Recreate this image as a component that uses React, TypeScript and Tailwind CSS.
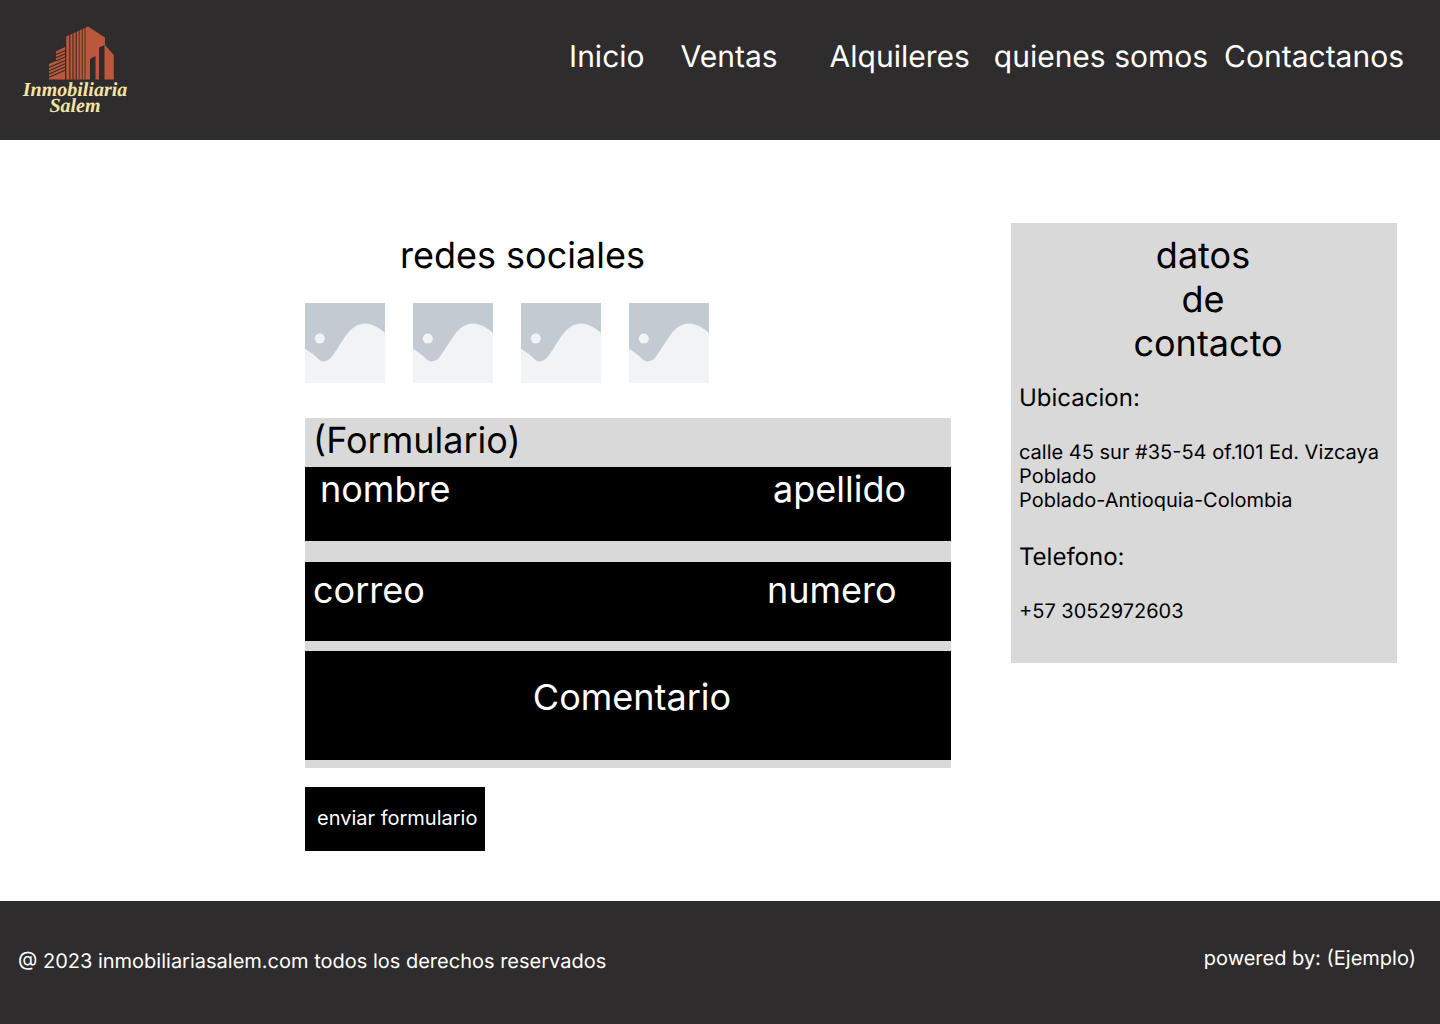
function Logo() {
  return (
    <svg
      viewBox="0 0 120 110"
      className="h-[110px] w-[120px]"
      role="img"
      aria-label="Inmobiliaria Salem"
    >
      <g fill="#bd573c">
        <path d="M34 49 L41 46 V36.500 L50 32 V64.500 H34 Z" />
        <path d="M51.300 21.500 L73 11.500 L90 22.500 V30 L84 32.500 V64.500 H80.500 V41 L75 44 V64.500 H51.300 Z" />
        <path d="M89.500 29.500 L98.800 40 V64.500 H89.500 Z" />
      </g>
      <g stroke="#2e2c2d" strokeWidth="1.100">
        <path d="M41 39.500 L50 35.500 M41 42.800 L50 38.800 M41 46 L50 42" />
        <path d="M34 52.500 L50 45.500 M34 55.800 L50 48.800 M34 59 L50 52 M34 62.300 L50 55.300" />
        <path d="M54.800 17 V64.500 M58 16 V64.500 M61.200 15 V64.500" />
        <path d="M64.200 14 V64.500 M67.200 13 V64.500 M70 11 V64.500" strokeWidth="0.800" />
      </g>
      <g
        fill="#f8e3a4"
        fontFamily="'Liberation Serif', serif"
        fontStyle="italic"
        fontWeight="700"
        textAnchor="middle"
      >
        <text x="60" y="81" fontSize="20">Inmobiliaria</text>
        <text x="60" y="97" fontSize="20">Salem</text>
      </g>
    </svg>
  );
}

function Placeholder({ label }: { label: string }) {
  return (
    <a href="#" aria-label={label}>
      <svg viewBox="0 0 80 80" className="block size-20" aria-hidden="true">
        <path d="M0 0H80V80H0Z" fill="#c2cad2" />
        <path
          d="M0 46 C6 49 10 53 14 56.500 C18 60 23 59 28 52 C36 42 44 20.500 60 20.500 C67 20.500 73 24 80 30 V80 H0 Z"
          fill="#f1f3f5"
        />
        <circle cx="14.800" cy="35.600" r="5" fill="#f1f3f5" />
      </svg>
    </a>
  );
}

const links = [
  { text: "Inicio", gap: "mr-9" },
  { text: "Ventas", gap: "mr-[52px]" },
  { text: "Alquileres", gap: "mr-6" },
  { text: "quienes somos", gap: "mr-4" },
  { text: "Contactanos", gap: "" },
];

const networks = ["Red social 1", "Red social 2", "Red social 3", "Red social 4"];

const field =
  "block h-11 min-w-0 bg-transparent text-4xl leading-[44px] text-white outline-none placeholder:text-white placeholder:opacity-100";

export default function App() {
  return (
    <div className="flex min-h-screen flex-col bg-white font-['Inter',sans-serif] text-black [text-rendering:geometricPrecision]">
      <header className="flex items-start justify-between bg-[#2e2c2d] pt-[15px] pr-9 pb-[15px] pl-[15px]">
        <Logo />
        <nav className="flex pt-6 text-[30px] leading-9 whitespace-nowrap text-white">
          {links.map((l) => (
            <a key={l.text} href="#" className={l.gap}>
              {l.text}
            </a>
          ))}
        </nav>
      </header>

      <main className="flex flex-1 items-start gap-15 pt-[83px] pr-[43px] pb-[50px] pl-[305px]">
        <section className="min-w-0 flex-1 pt-2.5">
          <h1 className="pl-[95px] text-4xl leading-[44px]">redes sociales</h1>
          <div className="mt-[26px] flex gap-7">
            {networks.map((n) => (
              <Placeholder key={n} label={n} />
            ))}
          </div>

          <form className="mt-[35px]">
            <div className="bg-[#d9d9d9] pb-2">
              <h2 className="h-[49px] pl-2 text-4xl leading-[44px]">(Formulario)</h2>
              <div className="flex h-[74px] justify-between bg-black pl-[15px]">
                <input className={`${field} w-80`} aria-label="nombre" placeholder="nombre" />
                <input className={`${field} w-[178px]`} aria-label="apellido" placeholder="apellido" />
              </div>
              <div className="mt-[21px] flex h-[79px] justify-between bg-black pt-1.5 pl-2">
                <input className={`${field} w-80`} type="email" aria-label="correo" placeholder="correo" />
                <input className={`${field} w-[184px]`} type="tel" aria-label="numero" placeholder="numero" />
              </div>
              <textarea
                className="mt-2.5 block h-[109px] w-full resize-none bg-black pt-6 pl-2 text-center text-4xl leading-[44px] text-white outline-none placeholder:text-white placeholder:opacity-100"
                aria-label="Comentario"
                placeholder="Comentario"
              />
            </div>
            <button
              type="submit"
              className="mt-[19px] h-16 bg-black pr-2 pb-0.5 pl-3 text-xl leading-6 text-white"
            >
              enviar formulario
            </button>
          </form>
        </section>

        <aside className="w-[386px] shrink-0 bg-[#d9d9d9] pt-2.5 pr-2.5 pb-10 pl-2 text-xl leading-6">
          <h2 className="text-center text-4xl leading-[44px] whitespace-pre">
            {"datos\nde\n contacto"}
          </h2>
          <h3 className="mt-[18px] text-2xl leading-[29px]">Ubicacion:</h3>
          <address className="mt-7 not-italic">
            calle 45 sur #35-54 of.101 Ed. Vizcaya
            <br />
            Poblado
            <br />
            Poblado-Antioquia-Colombia
          </address>
          <h3 className="mt-[30px] text-2xl leading-[29px]">Telefono:</h3>
          <p className="mt-7">+57 3052972603</p>
        </aside>
      </main>

      <footer className="flex items-start justify-between bg-[#2e2c2d] pt-[45px] pr-6 pb-[51px] pl-[18px] text-xl leading-6 text-white">
        <p className="pt-[3px]">@ 2023 inmobiliariasalem.com todos los derechos reservados</p>
        <p>powered by: (Ejemplo)</p>
      </footer>
    </div>
  );
}
